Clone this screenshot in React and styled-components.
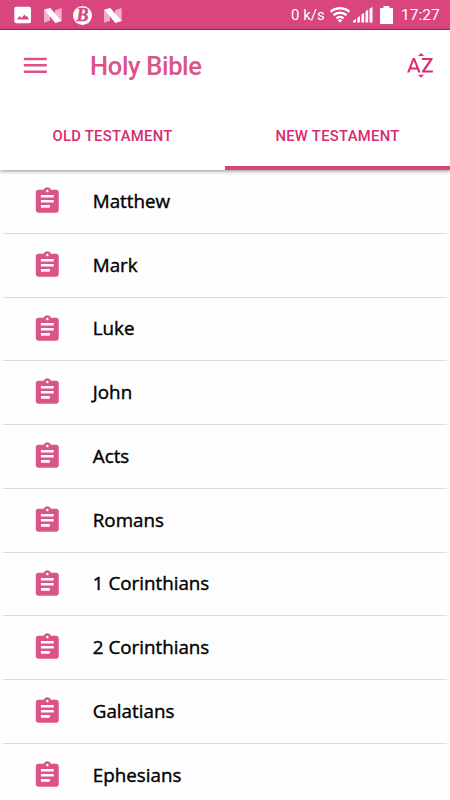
import React, { useState } from "react";
import styled, { createGlobalStyle } from "styled-components";
import { MdAssignment, MdMenu, MdSortByAlpha } from "react-icons/md";

const GlobalStyle = createGlobalStyle`
  * {
    box-sizing: border-box;
  }

  body {
    margin: 0;
    background-color: #fefefe;
    font-family: Roboto, "Liberation Sans", sans-serif;
    overflow: hidden;
  }
`;

const Screen = styled.div`
  width: 450px;
  height: 800px;
  display: flex;
  flex-direction: column;
  overflow: hidden;
`;

const StatusBar = styled.div`
  height: 30px;
  flex-shrink: 0;
  display: flex;
  align-items: center;
  justify-content: space-between;
  padding: 1px 11px 0 14px;
  background-color: #d9467d;
  border-bottom: 1px solid #d6136a;
  color: #fff;
`;

const Notifications = styled.div`
  display: flex;
  align-items: center;
  gap: 11.5px;
`;

const SystemStatus = styled.div`
  display: flex;
  align-items: center;
`;

const NetSpeed = styled.span`
  font-size: 15px;
  width: 39px;
  white-space: nowrap;
`;

const Clock = styled.span`
  margin-left: 8px;
  font-size: 15.5px;
  width: 38px;
  white-space: nowrap;
`;

const Header = styled.header`
  height: 140px;
  flex-shrink: 0;
  background-color: #fff;
  box-shadow: 0 1px 4px rgba(0, 0, 0, 0.45);
  z-index: 1;
`;

const Toolbar = styled.div`
  height: 71px;
  display: flex;
  align-items: center;
  padding: 0 14px 0 19.5px;
`;

const IconButton = styled.button`
  display: flex;
  padding: 0;
  border: none;
  background: none;
  color: ${({ $color }) => $color};
  font-size: 30.6px;
  cursor: pointer;
`;

const Title = styled.h1`
  flex: 1;
  margin: 1px 0 0 40px;
  font-size: 25.5px;
  font-weight: 500;
  letter-spacing: -0.35px;
  color: #da5489;
`;

const Tabs = styled.div`
  height: 69px;
  display: flex;
`;

const Tab = styled.button`
  flex: 1;
  padding: 4px 0 0;
  border: none;
  border-bottom: 4px solid ${({ $active }) => ($active ? "#d9467d" : "transparent")};
  background: none;
  color: #d92a71;
  font-family: inherit;
  font-size: 14.8px;
  font-weight: 500;
  letter-spacing: 0.3px;
  cursor: pointer;
`;

const BookList = styled.ul`
  flex: 1;
  margin: 0;
  padding: 0 3px;
  list-style: none;
  overflow: hidden;
`;

const BookItem = styled.li`
  height: 63.75px;
  display: flex;
  align-items: center;
  padding-left: 29px;
  border-bottom: 1px solid #dcdcdc;
  color: #da5489;
  font-size: 30.6px;
`;

const BookName = styled.span`
  margin: -1px 0 0 30.2px;
  color: #000;
  font-family: "Open Sans", "Noto Sans", sans-serif;
  font-size: 18.8px;
  font-weight: 500;
  -webkit-text-stroke: 0.4px #000;
`;

const PictureIcon = () => (
  <svg width="18" height="18" viewBox="0 0 18 18">
    <rect x="0.3" y="0.8" width="16.7" height="16.4" rx="2" fill="#fff" />
    <path d="M3 13.500l2.500-3.500 2 2 3-3.500 1.500 2.300 1-1 2 3.700z" fill="#d9467d" />
  </svg>
);

const NougatIcon = () => (
  <svg width="18" height="15" viewBox="0 0 18 15">
    <path d="M0 2l6 0v10.800L0 14.700z" fill="#f0b0c9" />
    <path d="M11 2.300L17.700 0v13l-6.700-2z" fill="#f0b0c9" />
    <path d="M0.300 1.500L6.300 0l11.400 13-6.400 2z" fill="#fff" />
  </svg>
);

const BetaBadge = styled.span`
  width: 19px;
  height: 19px;
  border-radius: 50%;
  background-color: #fff;
  color: #d9467d;
  font: italic bold 18px/19px "Liberation Serif", serif;
  -webkit-text-stroke: 0.5px #d9467d;
  text-align: center;
`;

const WifiIcon = () => (
  <svg width="20" height="16" viewBox="0 0 20 16" fill="none" stroke="#fff" strokeWidth="2.4">
    <path d="M0.7 4.800a14 14 0 0 1 18.600 0" />
    <path d="M3.500 8.200a10 10 0 0 1 13 0" />
    <path d="M6.400 11.300a5.500 5.500 0 0 1 7.200 0" />
    <path d="M7.500 13q2.500-1.600 5 0L10 15.700z" fill="#fff" stroke="none" />
  </svg>
);

const SignalBars = styled.svg`
  margin-left: 3px;
`;

const SignalIcon = () => (
  <SignalBars width="20" height="16" viewBox="0 0 20 16" fill="#fff">
    <path d="M0 15.500v-1.500l3-2.200v3.700zM4.300 15.500v-4.600l2.600-2v6.600zM8.400 15.500V7.700l2.700-2v9.800zM12.500 15.500V4.500l2.700-2v13zM16.600 15.500V1.500L19.500 0v15.500z" />
  </SignalBars>
);

const BatteryIcon = styled.svg`
  margin-left: 7px;
`;

const books = [
  "Matthew",
  "Mark",
  "Luke",
  "John",
  "Acts",
  "Romans",
  "1 Corinthians",
  "2 Corinthians",
  "Galatians",
  "Ephesians",
];

const tabs = ["OLD TESTAMENT", "NEW TESTAMENT"];

const App = () => {
  const [activeTab, setActiveTab] = useState("NEW TESTAMENT");

  return (
    <Screen>
      <GlobalStyle />
      <StatusBar>
        <Notifications>
          <PictureIcon />
          <NougatIcon />
          <BetaBadge>B</BetaBadge>
          <NougatIcon />
        </Notifications>
        <SystemStatus>
          <NetSpeed>0 k/s</NetSpeed>
          <WifiIcon />
          <SignalIcon />
          <BatteryIcon width="13" height="18" viewBox="0 0 13 18" fill="#fff">
            <path d="M3.500 0h6v2H13v16H0V2h3.500z" />
          </BatteryIcon>
          <Clock>17:27</Clock>
        </SystemStatus>
      </StatusBar>
      <Header>
        <Toolbar>
          <IconButton $color="#da5489" aria-label="Menu">
            <MdMenu />
          </IconButton>
          <Title>Holy Bible</Title>
          <IconButton $color="#d92d73" aria-label="Sort">
            <MdSortByAlpha />
          </IconButton>
        </Toolbar>
        <Tabs>
          {tabs.map((tab) => (
            <Tab key={tab} $active={tab === activeTab} onClick={() => setActiveTab(tab)}>
              {tab}
            </Tab>
          ))}
        </Tabs>
      </Header>
      <BookList>
        {books.map((book) => (
          <BookItem key={book}>
            <MdAssignment />
            <BookName>{book}</BookName>
          </BookItem>
        ))}
      </BookList>
    </Screen>
  );
};

export default App;
